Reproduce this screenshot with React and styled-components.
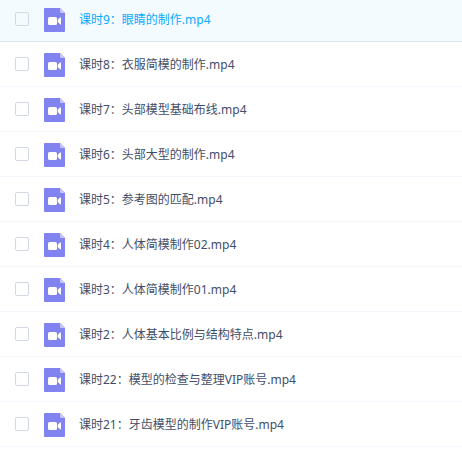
import React, { useState } from 'react';
import styled, { createGlobalStyle } from 'styled-components';

const GlobalStyle = createGlobalStyle`
    body {
        margin: 0;
        background-color: #fff;
        font-family: 'Noto Sans', 'Noto Sans CJK SC', sans-serif;
    }
`

const FileList = styled.ul`
    list-style: none;
    margin: -3px 0 0;
    padding: 0;
`

const FileRow = styled.li`
    box-sizing: border-box;
    display: flex;
    align-items: center;
    height: 45px;
    padding: 2px 15px 0;
    background-color: ${props => props.$active ? '#f4fbff' : '#fff'};
    border-bottom: 1px solid ${props => props.$active ? '#dae8f4' : '#f2f6fd'};
`

const CheckBox = styled.input`
    appearance: none;
    box-sizing: border-box;
    flex: none;
    width: 14px;
    height: 14px;
    margin: 0 15px 2px 0;
    border: 1px solid #d2d9e4;
    border-radius: 2px;
    background-color: transparent;

    &:checked {
        background-color: #09aaff;
        border-color: #09aaff;
    }
`

const FileLabel = styled.label`
    display: flex;
    align-items: center;
    gap: 14px;
    min-width: 0;
`

const FileName = styled.span`
    font-size: 12px;
    line-height: 18px;
    white-space: nowrap;
    color: ${props => props.$active ? '#09aaff' : '#424e67'};
`

const IconSvg = styled.svg`
    flex: none;
    width: 21px;
    height: 24px;
`

const files = [
    '课时9：眼睛的制作.mp4',
    '课时8：衣服简模的制作.mp4',
    '课时7：头部模型基础布线.mp4',
    '课时6：头部大型的制作.mp4',
    '课时5：参考图的匹配.mp4',
    '课时4：人体简模制作02.mp4',
    '课时3：人体简模制作01.mp4',
    '课时2：人体基本比例与结构特点.mp4',
    '课时22：模型的检查与整理VIP账号.mp4',
    '课时21：牙齿模型的制作VIP账号.mp4',
]

function VideoIcon() {
  return (
    <IconSvg viewBox="0 0 21 24" aria-hidden="true">
      <path d="M1 0H16l5 5v18a1 1 0 0 1-1 1H1a1 1 0 0 1-1-1V1a1 1 0 0 1 1-1z" fill="#8183f1" />
      <path d="M16 0l5 5h-4a1 1 0 0 1-1-1z" fill="#c5c6fa" />
      <rect x="4" y="9" width="9" height="8" rx="1.5" fill="#fff" />
      <path d="M17 9.300v7.400q-1.500-.3-3.300-2.700v-2q1.800-2.400 3.300-2.700z" fill="#fff" />
    </IconSvg>
  )
}

function App() {
  const [checked, setChecked] = useState([]);

  const toggle = name => {
    setChecked(checked.includes(name) ? checked.filter(item => item !== name) : [...checked, name])
  }

  return (
    <>
      <GlobalStyle />
      <FileList>
        {files.map((name, index) => (
          <FileRow key={name} $active={index === 0}>
            <CheckBox
              type="checkbox"
              id={`file-${index}`}
              checked={checked.includes(name)}
              onChange={() => toggle(name)}
            />
            <FileLabel htmlFor={`file-${index}`}>
              <VideoIcon />
              <FileName $active={index === 0}>{name}</FileName>
            </FileLabel>
          </FileRow>
        ))}
      </FileList>
    </>
  );
}

export default App;
